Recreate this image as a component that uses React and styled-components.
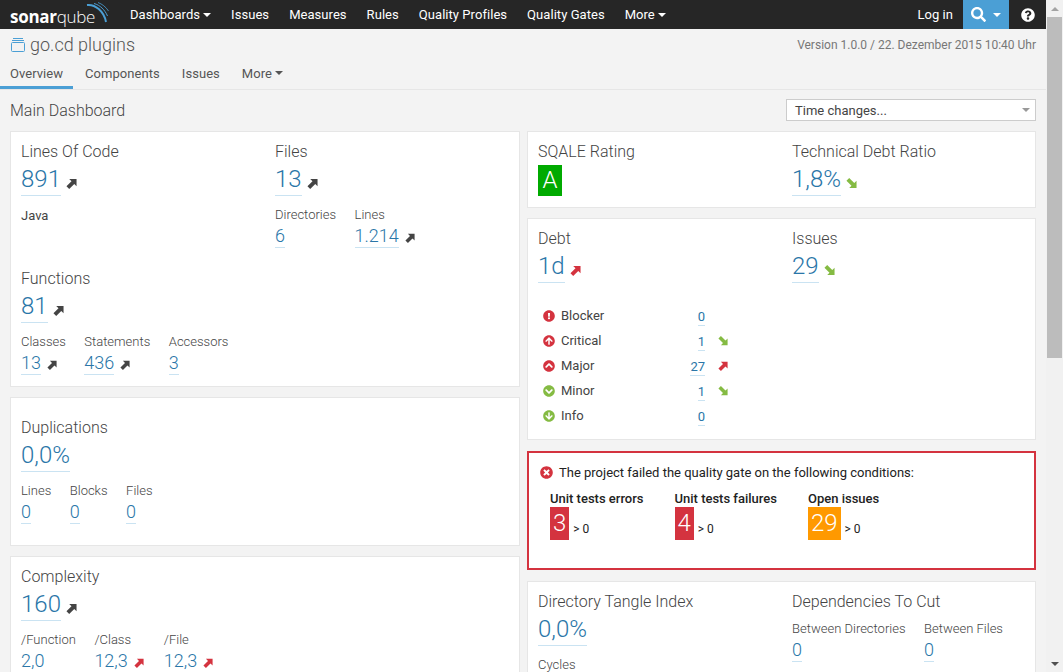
import React from "react";
import styled, { createGlobalStyle } from "styled-components";
import {
  FaSearch,
  FaQuestionCircle,
  FaExclamationCircle,
  FaArrowCircleUp,
  FaChevronCircleUp,
  FaChevronCircleDown,
  FaArrowCircleDown,
  FaTimesCircle,
} from "react-icons/fa";

const RED = "#d4333f";
const GREEN = "#85bb43";
const BLUE = "#4b9fd5";
const LINK = "#2a76a8";

const GlobalStyle = createGlobalStyle`
  html, body {
    margin: 0;
    height: 100%;
    overflow: hidden;
  }
  body {
    font-family: Roboto, "Liberation Sans", sans-serif;
    font-size: 13px;
    color: #444;
    background: #f3f3f3;
  }
`;

const Root = styled.div`
  display: flex;
  height: 100vh;
`;

const Page = styled.div`
  flex: 1;
  min-width: 0;
  overflow: hidden;
`;

const Scrollbar = styled.div`
  width: 17px;
  flex: none;
  display: flex;
  flex-direction: column;
  align-items: center;
  background: #f1f1f1;
`;

const ScrollArrow = styled.div`
  height: 17px;
  flex: none;
  display: flex;
  align-items: center;
  justify-content: center;
`;

const ScrollThumb = styled.div`
  width: 15px;
  height: 341px;
  background: #bcbcbc;
`;

const ScrollRest = styled.div`
  flex: 1;
`;

const ArrowGlyph = styled.div`
  width: 0;
  height: 0;
  border-left: 4px solid transparent;
  border-right: 4px solid transparent;
  ${(props) =>
    props.$down
      ? "border-top: 4px solid #505050;"
      : "border-bottom: 4px solid #a3a3a3;"}
`;

/* top bar */
const NavBar = styled.nav`
  display: flex;
  align-items: center;
  height: 29px;
  background: #262626;
  color: #fff;
`;

const Logo = styled.div`
  position: relative;
  width: 110px;
  height: 29px;
  margin-left: 10px;
  flex: none;
  display: flex;
  align-items: baseline;
  font-family: "Open Sans", sans-serif;
  font-size: 17px;
  line-height: 33px;
  letter-spacing: -0.3px;
`;

const LogoBold = styled.span`
  font-weight: 700;
`;

const LogoLight = styled.span`
  font-weight: 300;
`;

const LogoWaves = styled.svg`
  position: absolute;
  left: 76px;
  top: 2px;
`;

const NavItem = styled.a`
  display: flex;
  align-items: center;
  height: 29px;
  padding: 0 10px;
  font-size: 13px;
  letter-spacing: 0.05px;
  color: #fff;
`;

const NavSpacer = styled.div`
  flex: 1;
`;

const SearchButton = styled.div`
  display: flex;
  align-items: center;
  justify-content: center;
  gap: 4px;
  width: 46px;
  height: 29px;
  background: ${BLUE};
  font-size: 15px;
`;

const HelpButton = styled.div`
  display: flex;
  align-items: center;
  justify-content: center;
  width: 37px;
  height: 29px;
  font-size: 14px;
`;

const Caret = styled.span`
  display: inline-block;
  width: 0;
  height: 0;
  margin-left: 3px;
  border-left: 4px solid transparent;
  border-right: 4px solid transparent;
  border-top: 4px solid ${(props) => props.$color || "#fff"};
`;

/* project header */
const ProjectRow = styled.div`
  display: flex;
  align-items: center;
  justify-content: space-between;
  height: 31px;
  padding: 0 10px;
`;

const ProjectName = styled.div`
  display: flex;
  align-items: center;
  gap: 5px;
  padding-left: 1px;
  font-size: 18px;
  font-weight: 300;
  color: #555;
`;

const Version = styled.div`
  font-size: 12px;
  color: #777;
`;

const Tabs = styled.div`
  display: flex;
  gap: 2px;
  height: 29px;
  border-bottom: 1px solid #e6e6e6;
`;

const Tab = styled.div`
  display: flex;
  align-items: center;
  height: 26px;
  padding: 0 10px;
  font-size: 13px;
  letter-spacing: 0.05px;
  color: #555;
  border-bottom: 3px solid ${(props) => (props.$active ? BLUE : "transparent")};
`;

const DashboardHead = styled.div`
  display: flex;
  align-items: center;
  justify-content: space-between;
  padding: 9px 10px 10px;
`;

const DashboardTitle = styled.div`
  font-size: 16px;
  font-weight: 300;
  color: #444;
`;

const SelectBox = styled.div`
  display: flex;
  align-items: center;
  justify-content: space-between;
  box-sizing: border-box;
  width: 250px;
  height: 22px;
  padding: 0 5px 0 8px;
  background: #fff;
  border: 1px solid #ccc;
  font-size: 13px;
  color: #444;
`;

/* dashboard */
const Columns = styled.div`
  display: grid;
  grid-template-columns: 510px 509px;
  column-gap: 7px;
  padding: 0 10px;
  align-items: start;
`;

const Column = styled.div`
  display: flex;
  flex-direction: column;
`;

const Card = styled.section`
  background: #fff;
  border: 1px solid #e6e6e6;
  padding: 10px 10px 11px;
  margin-bottom: 10px;
`;

const TwoCols = styled.div`
  display: grid;
  grid-template-columns: 254px 1fr;
`;

const Measure = styled.div`
  margin: ${(props) => props.$margin || "0"};
`;

const Label = styled.div`
  font-size: 16px;
  font-weight: 300;
  line-height: 20px;
  color: #444;
`;

const ValueRow = styled.div`
  display: flex;
  align-items: flex-start;
  gap: 5px;
`;

const Value = styled.a`
  display: block;
  padding-top: 2px;
  font-size: 24px;
  font-weight: 300;
  line-height: 31px;
  color: ${LINK};
  border-bottom: 1px solid #cae3f2;
`;

const Language = styled.div`
  margin-top: 12px;
  font-size: 13px;
  line-height: 16px;
  color: #444;
`;

const SubRow = styled.div`
  display: flex;
  gap: 18.5px;
  margin-top: ${(props) => props.$top ?? 10}px;
`;

const SubLabel = styled.div`
  font-size: 13px;
  font-weight: 300;
  line-height: 18px;
  color: #444;
`;

const SubValueRow = styled.div`
  display: flex;
  align-items: flex-start;
  gap: 6px;
`;

const SubValue = styled.a`
  display: block;
  font-size: 18px;
  font-weight: 300;
  line-height: 23px;
  color: ${LINK};
  border-bottom: 1px solid #cae3f2;
`;

const TrendIcon = styled.svg`
  flex: none;
  margin-top: ${(props) => props.$top}px;
  margin-right: ${(props) => props.$right}px;
`;

const Rating = styled.div`
  display: inline-block;
  margin-top: 3px;
  padding: 0 4.5px;
  height: 31px;
  line-height: 31px;
  font-size: 24px;
  font-weight: 300;
  color: #fff;
  background: #00aa00;
`;

/* issues by severity */
const Severities = styled.div`
  margin-top: 20px;
`;

const SeverityRow = styled.div`
  display: flex;
  align-items: center;
  height: 25px;
  padding-left: 5px;
`;

const SeverityIcon = styled.span`
  display: flex;
  width: 18px;
  font-size: 12px;
  color: ${(props) => props.$color};
`;

const SeverityName = styled.span`
  width: 104px;
  font-size: 13px;
  color: #444;
`;

const SeverityCount = styled.span`
  width: 40px;
  margin-top: 2px;
  display: flex;
  justify-content: flex-end;
`;

const CountLink = styled.a`
  display: block;
  font-size: 13px;
  line-height: 17px;
  color: ${LINK};
  border-bottom: 1px solid #cae3f2;
`;

const SeverityTrend = styled.span`
  display: flex;
  margin-left: 13px;
`;

/* quality gate */
const GateCard = styled.section`
  background: #fff;
  border: 2px solid ${RED};
  padding: 10px 11px 28px;
  margin-bottom: 11px;
  margin-top: 1px;
`;

const GateHead = styled.div`
  display: flex;
  align-items: center;
  gap: 6px;
  height: 18px;
  font-size: 13px;
  color: #222;
`;

const GateIcon = styled.span`
  display: flex;
  font-size: 13px;
  color: ${RED};
`;

const Conditions = styled.div`
  display: flex;
  gap: 31px;
  margin-top: 10px;
  padding-left: 10px;
`;

const ConditionTitle = styled.div`
  font-size: 13px;
  font-weight: 500;
  line-height: 16px;
  color: #222;
`;

const ConditionBody = styled.div`
  display: flex;
  align-items: flex-end;
  gap: 4px;
`;

const Badge = styled.div`
  height: 33px;
  padding: 0 3px;
  line-height: 33px;
  font-size: 24px;
  font-weight: 300;
  color: #fff;
  background: ${(props) => props.$color};
`;

const Threshold = styled.div`
  font-size: 12px;
  line-height: 22px;
  color: #222;
`;

const ARROW_UP = "M3.5 1H11.5V9L9 6.5 3.5 12 .5 9 6 3.5Z";
const ARROW_DOWN = "M3.5 11H11.5V3L9 5.5 3.5 0 .5 3 6 8.5Z";

const Trend = ({ down, color = "#444", size = 11, top = 16, right = 0 }) => (
  <TrendIcon $top={top} $right={right} width={size} height={size} viewBox="0 0 12 12">
    <path d={down ? ARROW_DOWN : ARROW_UP} fill={color} />
  </TrendIcon>
);

const Big = ({ label, value, trend, margin, children }) => (
  <Measure $margin={margin}>
    <Label>{label}</Label>
    <ValueRow>
      <Value>{value}</Value>
      {trend}
    </ValueRow>
    {children}
  </Measure>
);

const Sub = ({ label, value, trend }) => (
  <div>
    <SubLabel>{label}</SubLabel>
    <SubValueRow>
      <SubValue>{value}</SubValue>
      {trend}
    </SubValueRow>
  </div>
);

const subTrend = (props) => <Trend size={10} top={9} right={1.5} {...props} />;

const severities = [
  { name: "Blocker", icon: <FaExclamationCircle />, color: RED, count: 0 },
  {
    name: "Critical",
    icon: <FaArrowCircleUp />,
    color: RED,
    count: 1,
    trend: <Trend down color={GREEN} size={10} top={0} />,
  },
  {
    name: "Major",
    icon: <FaChevronCircleUp />,
    color: RED,
    count: 27,
    trend: <Trend color={RED} size={10} top={0} />,
  },
  {
    name: "Minor",
    icon: <FaChevronCircleDown />,
    color: GREEN,
    count: 1,
    trend: <Trend down color={GREEN} size={10} top={0} />,
  },
  { name: "Info", icon: <FaArrowCircleDown />, color: GREEN, count: 0 },
];

const conditions = [
  { title: "Unit tests errors", value: 3, color: RED },
  { title: "Unit tests failures", value: 4, color: RED },
  { title: "Open issues", value: 29, color: "#ff9900" },
];

const App = () => {
  return (
    <Root>
      <GlobalStyle />
      <Page>
        <NavBar>
          <Logo>
            <LogoBold>sonar</LogoBold>
            <LogoLight>qube</LogoLight>
            <LogoWaves width="24" height="24" viewBox="0 0 24 24" fill="none">
              <path d="M1 3C9 2 18 9 20 20" stroke={BLUE} strokeWidth="2" />
              <path d="M8 1.5C14 3 19 8 21.5 14" stroke={BLUE} strokeWidth="1" />
              <path d="M12 .5C16 2 20 5 22.5 9" stroke={BLUE} strokeWidth="0.8" />
            </LogoWaves>
          </Logo>
          <NavItem>
            Dashboards <Caret />
          </NavItem>
          <NavItem>Issues</NavItem>
          <NavItem>Measures</NavItem>
          <NavItem>Rules</NavItem>
          <NavItem>Quality Profiles</NavItem>
          <NavItem>Quality Gates</NavItem>
          <NavItem>
            More <Caret />
          </NavItem>
          <NavSpacer />
          <NavItem>Log in</NavItem>
          <SearchButton>
            <FaSearch />
            <Caret />
          </SearchButton>
          <HelpButton>
            <FaQuestionCircle />
          </HelpButton>
        </NavBar>

        <ProjectRow>
          <ProjectName>
            <svg width="14" height="14" viewBox="0 0 14 14" fill="none" stroke={BLUE}>
              <rect x="0.500" y="4.500" width="13" height="9" rx="1" />
              <path d="M2 0.500H12M1 2.500H13" />
            </svg>
            go.cd plugins
          </ProjectName>
          <Version>Version 1.0.0 / 22. Dezember 2015 10:40 Uhr</Version>
        </ProjectRow>

        <Tabs>
          <Tab $active>Overview</Tab>
          <Tab>Components</Tab>
          <Tab>Issues</Tab>
          <Tab>
            More <Caret $color="#555" />
          </Tab>
        </Tabs>

        <DashboardHead>
          <DashboardTitle>Main Dashboard</DashboardTitle>
          <SelectBox>
            Time changes...
            <Caret $color="#999" />
          </SelectBox>
        </DashboardHead>

        <Columns>
          <Column>
            <Card>
              <TwoCols>
                <Big label="Lines Of Code" value="891" trend={<Trend />}>
                  <Language>Java</Language>
                </Big>
                <Big label="Files" value="13" trend={<Trend />}>
                  <SubRow>
                    <Sub label="Directories" value="6" />
                    <Sub label="Lines" value="1.214" trend={subTrend()} />
                  </SubRow>
                </Big>
              </TwoCols>
              <Big label="Functions" value="81" trend={<Trend />} margin="21px 0 0">
                <SubRow>
                  <Sub label="Classes" value="13" trend={subTrend()} />
                  <Sub label="Statements" value="436" trend={subTrend()} />
                  <Sub label="Accessors" value="3" />
                </SubRow>
              </Big>
            </Card>

            <Card>
              <Big label="Duplications" value="0,0%" margin="10px 0">
                <SubRow>
                  <Sub label="Lines" value="0" />
                  <Sub label="Blocks" value="0" />
                  <Sub label="Files" value="0" />
                </SubRow>
              </Big>
            </Card>

            <Card>
              <Big label="Complexity" value="160" trend={<Trend />}>
                <SubRow>
                  <Sub label="/Function" value="2,0" />
                  <Sub label="/Class" value="12,3" trend={subTrend({ color: RED })} />
                  <Sub label="/File" value="12,3" trend={subTrend({ color: RED })} />
                </SubRow>
              </Big>
            </Card>
          </Column>

          <Column>
            <Card>
              <TwoCols>
                <Measure>
                  <Label>SQALE Rating</Label>
                  <Rating>A</Rating>
                </Measure>
                <Big
                  label="Technical Debt Ratio"
                  value="1,8%"
                  trend={<Trend down color={GREEN} />}
                />
              </TwoCols>
            </Card>

            <Card>
              <TwoCols>
                <Big label="Debt" value="1d" trend={<Trend color={RED} />} />
                <Big label="Issues" value="29" trend={<Trend down color={GREEN} />} />
              </TwoCols>
              <Severities>
                {severities.map((s) => (
                  <SeverityRow key={s.name}>
                    <SeverityIcon $color={s.color}>{s.icon}</SeverityIcon>
                    <SeverityName>{s.name}</SeverityName>
                    <SeverityCount>
                      <CountLink>{s.count}</CountLink>
                    </SeverityCount>
                    <SeverityTrend>{s.trend}</SeverityTrend>
                  </SeverityRow>
                ))}
              </Severities>
            </Card>

            <GateCard>
              <GateHead>
                <GateIcon>
                  <FaTimesCircle />
                </GateIcon>
                The project failed the quality gate on the following conditions:
              </GateHead>
              <Conditions>
                {conditions.map((c) => (
                  <div key={c.title}>
                    <ConditionTitle>{c.title}</ConditionTitle>
                    <ConditionBody>
                      <Badge $color={c.color}>{c.value}</Badge>
                      <Threshold>&gt; 0</Threshold>
                    </ConditionBody>
                  </div>
                ))}
              </Conditions>
            </GateCard>

            <Card>
              <TwoCols>
                <Big label="Directory Tangle Index" value="0,0%">
                  <SubRow>
                    <Sub label="Cycles" value="0" />
                  </SubRow>
                </Big>
                <Measure>
                  <Label>Dependencies To Cut</Label>
                  <SubRow $top={8}>
                    <Sub label="Between Directories" value="0" />
                    <Sub label="Between Files" value="0" />
                  </SubRow>
                </Measure>
              </TwoCols>
            </Card>
          </Column>
        </Columns>
      </Page>

      <Scrollbar>
        <ScrollArrow>
          <ArrowGlyph />
        </ScrollArrow>
        <ScrollThumb />
        <ScrollRest />
        <ScrollArrow>
          <ArrowGlyph $down />
        </ScrollArrow>
      </Scrollbar>
    </Root>
  );
};

export default App;
